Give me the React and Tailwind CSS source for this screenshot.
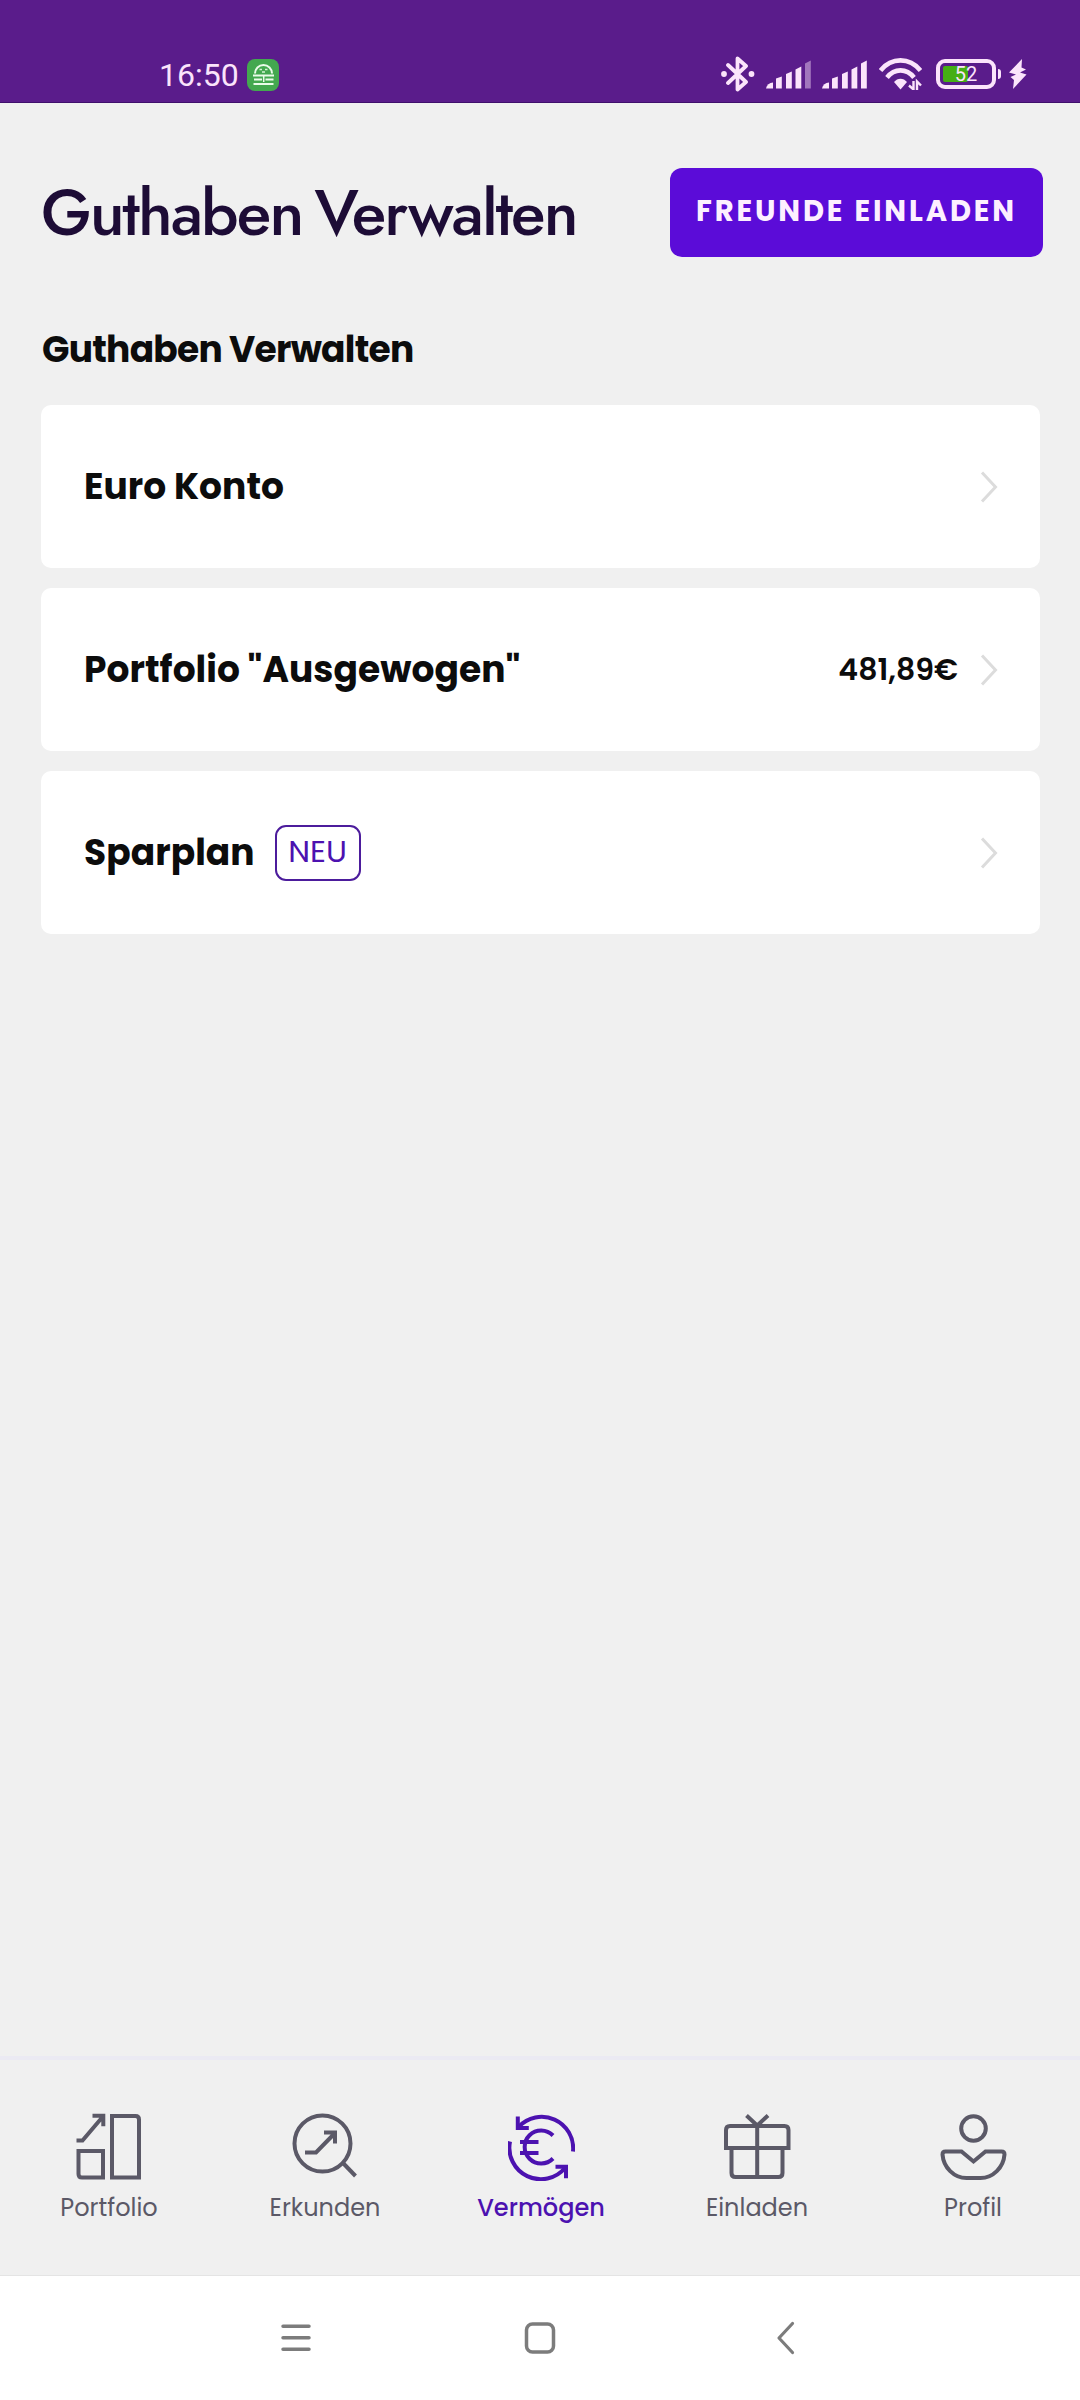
import React from "react";

function BluetoothIcon() {
  return (
    <svg className="ml-px h-9 w-[34px]" viewBox="0 0 34 36" fill="none" stroke="currentColor" strokeWidth="3.8" strokeLinejoin="round" strokeLinecap="round">
      <path d="M7 9l18 17-8.500 7.500V2.500L25 10 7 27" />
      <circle cx="3" cy="18" r="2.900" fill="currentColor" stroke="none" />
      <circle cx="30.500" cy="18" r="2.900" fill="currentColor" stroke="none" />
    </svg>
  );
}

function SignalIcon({ weak }) {
  return (
    <svg className="h-8 w-[46px]" viewBox="0 0 46 32" fill="currentColor">
      <path d="M0 30.500a7 7 0 0 1 7-6V30.500z" />
      <path d="M10 20.500l5.800-2V30.500H10z" />
      <path d="M20 16l5.800-2.500v17H20z" />
      <path d="M29.500 11.500l5.800-3v22h-5.800z" />
      <path d="M39 5.500l5.800-3v28H39z" opacity={weak ? 0.45 : 1} />
    </svg>
  );
}

function WifiIcon() {
  return (
    <svg className="h-8 w-[43px]" viewBox="0 0 43 32" fill="none" stroke="currentColor" strokeWidth="4.600">
      <path d="M1.500 12.500C12.500-1 30.500-1 41.500 12.500" />
      <path d="M8 19.500c7.500-9.500 19.500-9.500 27 0" />
      <path d="M21.500 31.500l-6.500-7.500c3.500-4.500 9.500-4.500 13 0z" fill="currentColor" stroke="none" />
      <path d="M34.500 23v8.500l-4.500-4M38 32v-8.500l4 4" strokeWidth="2.400" />
    </svg>
  );
}

function BatteryIcon() {
  return (
    <div className="flex items-center gap-0.5">
      <div className="relative flex h-[30px] w-[60px] items-center justify-center rounded-[9px] border-4 border-[#fbe4fb]">
        <div className="absolute left-[3px] top-[3px] h-4 w-[25px] rounded-[2px] bg-[#45ae14]" />
        <span className="relative font-['Roboto',sans-serif] text-[20px] leading-none">52</span>
      </div>
      <div className="h-2.5 w-[3px] rounded-r bg-current" />
    </div>
  );
}

function BoltIcon() {
  return (
    <svg className="h-[30px] w-[18px]" viewBox="0 0 18 30" fill="currentColor">
      <path d="M13 0L0 13.500l7 2L1.500 18l3.500 3-1 9L17.500 15.500l-6.500-2 6-3-4.500-2z" />
    </svg>
  );
}

function AppBadge() {
  return (
    <svg className="h-8 w-8" viewBox="0 0 32 32">
      <rect width="32" height="32" rx="8" fill="#43a84f" />
      <path d="M8 14.500a8.500 8.500 0 0 1 17 0" fill="none" stroke="#eafbe9" strokeWidth="2" />
      <path d="M12.500 10.500h2.500M18 10.500h2.500M15 13h3" stroke="#d5f2d3" strokeWidth="1.500" />
      <path d="M6 16.500h21M7 20.500h8M18.500 20.500h8M6.500 25h20" stroke="#eafbe9" strokeWidth="2.200" />
      <path d="M16.700 17v6" stroke="#eafbe9" strokeWidth="1.500" />
    </svg>
  );
}

function StatusBar() {
  return (
    <header className="flex h-[103px] items-end justify-between border-b border-[#3f0f6c] bg-[#5a1c8b] pb-[11px] pl-[159px] pr-[53px] text-[#fbe4fb]">
      <div className="flex items-center gap-2">
        <span className="font-['Roboto',sans-serif] text-[32px] leading-8">16:50</span>
        <AppBadge />
      </div>
      <div className="flex translate-y-px items-center">
        <BluetoothIcon />
        <div className="ml-[11px]"><SignalIcon weak /></div>
        <div className="ml-[10px]"><SignalIcon /></div>
        <div className="ml-[11px]"><WifiIcon /></div>
        <div className="ml-[14px]"><BatteryIcon /></div>
        <div className="ml-2"><BoltIcon /></div>
      </div>
    </header>
  );
}

function Chevron() {
  return (
    <svg className="h-8 w-[18px]" viewBox="0 0 18 32" fill="none" stroke="#dcdcdc" strokeWidth="3">
      <path d="M2 1.500L15.500 16 2 30.500" />
    </svg>
  );
}

function AccountRow({ label, badge, amount }) {
  return (
    <button className="flex h-[163px] w-full items-center rounded-[10px] bg-white pl-[43px] pr-[42px] text-left text-[#0c0c0c]">
      <span className="text-[36px] font-bold leading-none tracking-[0.05px]">{label}</span>
      {badge && (
        <span className="ml-[20px] flex h-14 w-[86px] items-center justify-center rounded-[11px] border-2 border-[#4c1c9c] pb-0.5 text-[31px] text-[#4c12b0]">
          {badge}
        </span>
      )}
      {amount && <span className="ml-auto mr-[22px] text-[30px] font-semibold leading-none">{amount}</span>}
      <div className={amount ? "" : "ml-auto"}><Chevron /></div>
    </button>
  );
}

function PortfolioIcon() {
  return (
    <>
      <path d="M36 3h23.500q3.500 0 3.500 3.500V64.500H36z" />
      <path d="M2.500 38h24.500v26.500H6q-3.500 0-3.500-3.500z" />
      <path d="M.500 27.500h6L26.500 4M16.500 2.800h10.800v10.500" />
    </>
  );
}

function ExploreIcon() {
  return (
    <>
      <circle cx="30.500" cy="30.500" r="28" />
      <path d="M50.500 49.500L63.500 63" />
      <path d="M13 39.500h11L43 20M32 19.500h11v11" />
    </>
  );
}

function WealthIcon() {
  return (
    <>
      <path d="M10.500 14A31.500 31.500 0 0 1 65 38.500" />
      <path d="M9.800 3.500v11.500h11" />
      <path d="M2 28.500A31.500 31.500 0 0 0 57 55" />
      <path d="M47.500 53.800H58v11.500" />
      <path d="M45 22.500A16.500 16.500 0 1 0 45 45.500" />
      <path d="M12 29h18.500M12 40h18.500" />
    </>
  );
}

function GiftIcon() {
  return (
    <>
      <path d="M2 35V17q0-4 4-4h54.500q4 0 4 4V35z" />
      <path d="M7.500 35v25q0 4 4 4h43q4 0 4-4V35" />
      <path d="M33.200 13v51M22.500 2.500l10.700 10L44 2.500" />
    </>
  );
}

function ProfileIcon() {
  return (
    <>
      <circle cx="33.500" cy="15.500" r="12.300" />
      <path d="M5.500 38.500H21.500l12 10 12-10h16q3 0 3 3c-1 13-11.500 23.500-24 23.500h-14C14 65 3.500 54.500 2.500 41.500q0-3 3-3z" />
    </>
  );
}

const TABS = [
  { label: "Portfolio", Icon: PortfolioIcon },
  { label: "Erkunden", Icon: ExploreIcon },
  { label: "Vermögen", Icon: WealthIcon, active: true },
  { label: "Einladen", Icon: GiftIcon },
  { label: "Profil", Icon: ProfileIcon },
];

function TabBar() {
  return (
    <nav className="-mr-px grid h-[219px] grid-cols-5 border-t-4 border-[#ebeaf3] pl-px">
      {TABS.map(({ label, Icon, active }) => (
        <button key={label} className={active ? "flex flex-col items-center pt-[53px] font-medium text-[#4c12b0]" : "flex flex-col items-center pt-[53px] text-[#5b5967]"}>
          <svg className="h-[68px] w-[67px]" viewBox="0 0 67 68" fill="none" stroke="currentColor" strokeWidth="4">
            <Icon />
          </svg>
          <span className="mt-[11px] text-[24px] leading-8">{label}</span>
        </button>
      ))}
    </nav>
  );
}

function SystemNav() {
  return (
    <footer className="flex h-[125px] justify-between border-t border-[#e4e4e4] bg-white pl-[280px] pr-[284px] pt-[45px] text-[#7c7c7c]">
      <svg className="h-[34px] w-8" viewBox="0 0 32 34" stroke="currentColor" strokeWidth="3.500" strokeLinecap="round">
        <path d="M3 5.200h26M3 16.700h26M3 28.200h26" />
      </svg>
      <svg className="mr-2 h-[34px] w-[34px]" viewBox="0 0 34 34" fill="none" stroke="currentColor" strokeWidth="3.500">
        <rect x="3.500" y="3" width="27" height="28" rx="6" />
      </svg>
      <svg className="h-[34px] w-5" viewBox="0 0 20 34" fill="none" stroke="currentColor" strokeWidth="3.200" strokeLinecap="round" strokeLinejoin="round">
        <path d="M16.500 2.500L3 17l13.500 14.500" />
      </svg>
    </footer>
  );
}

export default function App() {
  return (
    <div className="flex h-[2400px] w-[1080px] flex-col overflow-hidden bg-[#f0f0f0] font-['Poppins','Inter',sans-serif]">
      <StatusBar />
      <main className="flex-1 pl-[41px] pr-[37px] pt-[65px]">
        <div className="flex items-center justify-between">
          <h1 className="whitespace-nowrap font-['Jost','Lato',sans-serif] text-[64px] font-medium leading-none tracking-[-1.95px] text-[#1d0c36] [word-spacing:-5px]">Guthaben Verwalten</h1>
          <button className="flex h-[89px] w-[373px] items-center justify-center rounded-xl bg-[#5b0cd8] pb-0.5 text-[29px] font-bold tracking-[2.85px] text-[#fdf0ff]">
            FREUNDE EINLADEN
          </button>
        </div>
        <h2 className="ml-px mt-[73px] text-[36px] font-bold leading-10 tracking-[-0.73px] text-[#0c0c0c]">Guthaben Verwalten</h2>
        <div className="mr-[3px] mt-[35px] flex flex-col gap-5">
          <AccountRow label="Euro Konto" />
          <AccountRow label={'Portfolio "Ausgewogen"'} amount="481,89€" />
          <AccountRow label="Sparplan" badge="NEU" />
        </div>
      </main>
      <TabBar />
      <SystemNav />
    </div>
  );
}
